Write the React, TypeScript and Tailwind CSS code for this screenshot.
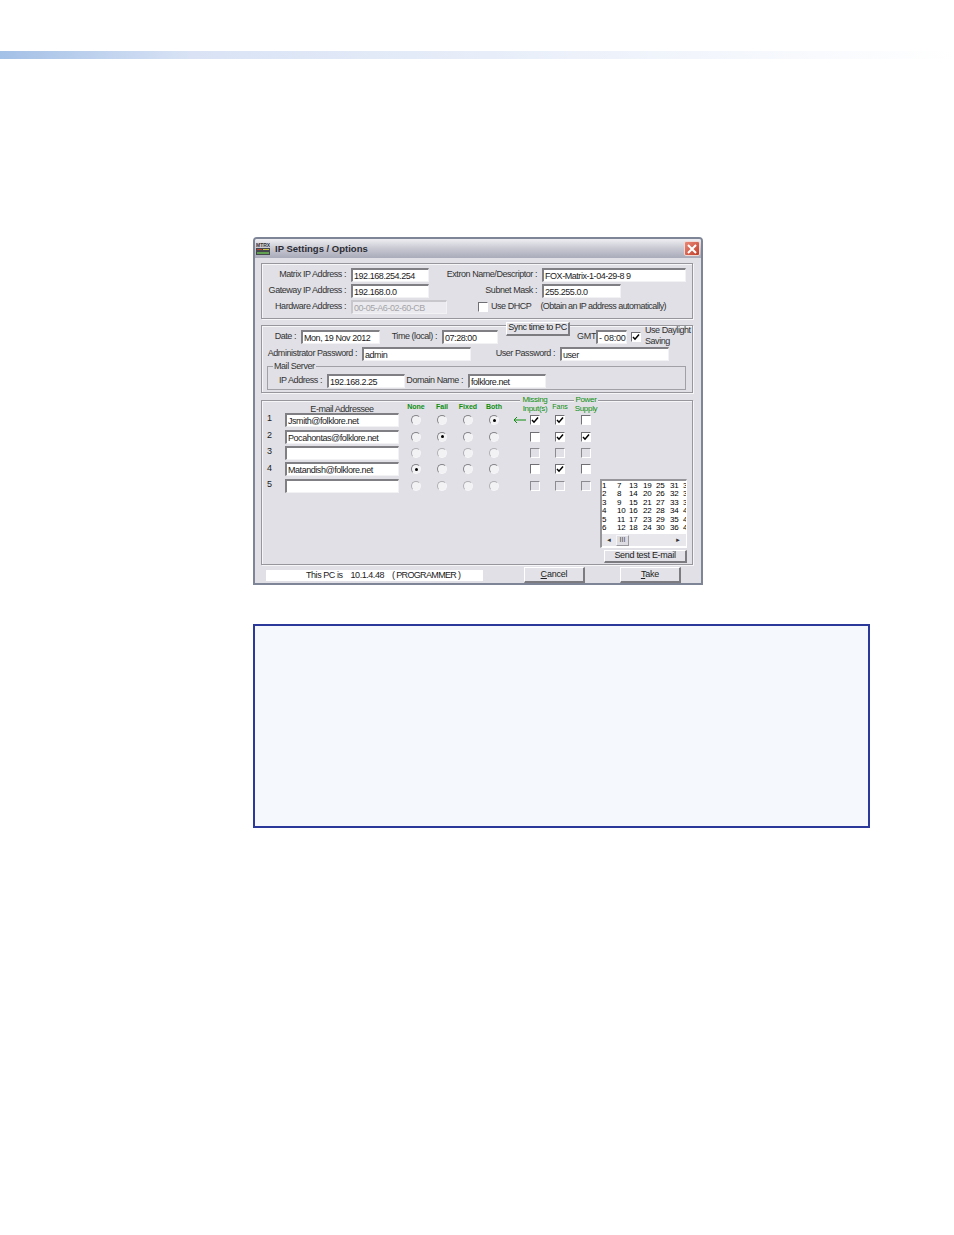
import { ReactNode } from "react";

const font = "font-['Liberation_Sans',Arial,sans-serif]";

const Input = ({ value = "", w, disabled = false, spaced = false }: { value?: string; w: string; disabled?: boolean; spaced?: boolean }) => (
  <div
    className={`${w} h-[14px] shrink-0 overflow-hidden whitespace-nowrap border-t-2 border-l-2 pl-[1px] text-[9px] leading-[12px] ${
      disabled ? "border-[#c8c8cc] bg-[#ebebef] text-[#a4a4a8]" : "border-[#808084] bg-white text-[#222]"
    } border-r border-b border-r-[#f2f2f4] border-b-[#f2f2f4] ${spaced ? "tracking-[-0.2px]" : "tracking-[-0.45px]"}`}
  >
    {value}
  </div>
);

const Label = ({ children, w }: { children: ReactNode; w: string }) => (
  <div className={`${w} shrink-0 whitespace-nowrap pr-[5px] text-right text-[9px] tracking-[-0.45px] text-[#333]`}>{children}</div>
);

const Panel = ({ className, children }: { className: string; children: ReactNode }) => (
  <div className={`ml-[6px] mr-[8px] border border-[#96969c] shadow-[inset_1px_1px_0_#f6f6f8,1px_1px_0_#f6f6f8] ${className}`}>{children}</div>
);

const Radio = ({ on = false, off = false }: { on?: boolean; off?: boolean }) => (
  <div className={`flex h-[10px] w-[10px] items-center justify-center rounded-full border border-r-[#f6f6f8] border-b-[#f6f6f8] bg-[#f2f2f4] ${off ? "border-t-[#b0b0b4] border-l-[#b0b0b4]" : "border-t-[#848488] border-l-[#848488]"}`}>
    {on && <div className="h-[3px] w-[3px] rounded-full bg-black" />}
  </div>
);

const Check = ({ on = false, off = false }: { on?: boolean; off?: boolean }) => (
  <div className={`flex h-[10px] w-[10px] items-center justify-center border-t border-l border-r border-b border-r-white border-b-white ${off ? "border-t-[#8c8c90] border-l-[#8c8c90] bg-[#e0e0e6]" : "border-t-[#707074] border-l-[#707074] bg-white"}`}>
    {on && (
      <svg width="8" height="8" viewBox="0 0 8 8">
        <path d="M1 4 L3 6.2 L7 1.5" fill="none" stroke="#000" strokeWidth="1.5" />
      </svg>
    )}
  </div>
);

const WinButton = ({ children, w, h = "h-[16px]" }: { children: ReactNode; w: string; h?: string }) => (
  <div className={`${w} ${h} flex shrink-0 items-center justify-center whitespace-nowrap border-t border-l border-white border-r-2 border-b-2 border-r-[#7c7c80] border-b-[#7c7c80] bg-[#e2e2e8] text-[9px] tracking-[-0.2px] text-[#222]`}>
    {children}
  </div>
);

const rows = [
  { n: 1, mail: "Jsmith@folklore.net", radio: 3, checks: [true, true, false], off: false },
  { n: 2, mail: "Pocahontas@folklore.net", radio: 1, checks: [false, true, true], off: false },
  { n: 3, mail: "", radio: -1, checks: [false, false, false], off: true },
  { n: 4, mail: "Matandish@folklore.net", radio: 0, checks: [false, true, false], off: false },
  { n: 5, mail: "", radio: -1, checks: [false, false, false], off: true },
];

const listCols = [
  { w: "w-[15px]", items: ["1", "2", "3", "4", "5", "6"] },
  { w: "w-[12px]", items: ["7", "8", "9", "10", "11", "12"] },
  { w: "w-[14px]", items: ["13", "14", "15", "16", "17", "18"] },
  { w: "w-[13px]", items: ["19", "20", "21", "22", "23", "24"] },
  { w: "w-[14px]", items: ["25", "26", "27", "28", "29", "30"] },
  { w: "w-[13px]", items: ["31", "32", "33", "34", "35", "36"] },
  { w: "w-[3px]", items: ["37", "38", "39", "40", "41", "42"] },
];

const Dialog = () => (
  <div className={`${font} ml-[253px] h-[348px] w-[450px] overflow-hidden rounded-t-[4px] border-2 border-[#7d8596] bg-[#e0e0e6]`}>
    {/* Title bar */}
    <div className="flex h-[19px] items-center bg-gradient-to-b from-[#eeeef2] via-[#c8c8d2] to-[#a9abba] pl-[1px] pr-[1px]">
      <svg width="14" height="14" viewBox="0 0 14 14">
        <text x="0" y="4.5" fontSize="5" fontWeight="700" fill="#333" fontFamily="Liberation Sans">MTRX</text>
        <rect x="0" y="6" width="14" height="7" fill="#44484c" />
        <rect x="1" y="7" width="5" height="1" fill="#c04030" />
        <rect x="7" y="7" width="6" height="1" fill="#d0c040" />
        <rect x="1" y="10" width="12" height="2" fill="#60a050" />
      </svg>
      <span className="ml-[5px] mt-[2px] text-[9.5px] font-bold text-[#2c2c34]">IP Settings / Options</span>
      <div className="ml-auto flex h-[15px] w-[16px] items-center justify-center rounded-[2px] border border-[#f0d8d4] bg-gradient-to-br from-[#e88878] to-[#c03c28]">
        <svg width="10" height="10" viewBox="0 0 10 10">
          <path d="M1 1 L9 9 M9 1 L1 9" stroke="#fff" strokeWidth="2" />
        </svg>
      </div>
    </div>

    {/* Network */}
    <Panel className="mt-[5px] h-[56px] pl-[1px] pt-[4px]">
      <div className="flex h-[14px] items-center">
        <Label w="w-[88px]">Matrix IP Address :</Label>
        <Input w="w-[78px]" value="192.168.254.254" />
        <Label w="w-[113px]">Extron Name/Descriptor :</Label>
        <Input w="w-[144px]" value="FOX-Matrix-1-04-29-8 9" />
      </div>
      <div className="mt-[2px] flex h-[14px] items-center">
        <Label w="w-[88px]">Gateway IP Address :</Label>
        <Input w="w-[78px]" value="192.168.0.0" />
        <Label w="w-[113px]">Subnet Mask :</Label>
        <Input w="w-[79px]" value="255.255.0.0" />
      </div>
      <div className="mt-[2px] flex h-[14px] items-center">
        <Label w="w-[88px]">Hardware Address :</Label>
        <Input w="w-[96px]" value="00-05-A6-02-60-CB" disabled />
        <div className="ml-[31px]"><Check /></div>
        <span className="ml-[3px] whitespace-nowrap text-[9px] tracking-[-0.45px] text-[#333]">Use DHCP</span>
        <span className="ml-[9px] whitespace-nowrap text-[9px] tracking-[-0.55px] text-[#333]">(Obtain an IP address automatically)</span>
      </div>
    </Panel>

    {/* Date, passwords, mail server */}
    <Panel className="mt-[6px] h-[68px] pl-[1px] pt-[4px]">
      <div className="flex h-[14px] items-center">
        <Label w="w-[38px]">Date :</Label>
        <Input w="w-[79px]" value="Mon, 19 Nov 2012" />
        <Label w="w-[62px]">Time (local) :</Label>
        <Input w="w-[56px]" value="07:28:00" />
        <div className="ml-[8px] -mt-[17px]">
          <WinButton w="w-[64px]" h="h-[14px]"><span className="tracking-[-0.4px]">Sync time to PC</span></WinButton>
        </div>
        <span className="ml-[7px] w-[19px] shrink-0 text-[9px] tracking-[-0.2px] text-[#333]">GMT</span>
        <Input w="w-[31px]" value="- 08:00" spaced />
        <div className="ml-[4px]"><Check on /></div>
        <div className="ml-[4px] -mt-[2px] whitespace-nowrap text-[9px] leading-[11px] tracking-[-0.45px] text-[#333]">
          Use Daylight
          <br />
          Saving
        </div>
      </div>
      <div className="mt-[3px] flex h-[14px] items-center">
        <Label w="w-[99px]">Administrator Password :</Label>
        <Input w="w-[109px]" value="admin" />
        <Label w="w-[89px]">User Password :</Label>
        <Input w="w-[109px]" value="user" />
      </div>
      <div className="relative ml-[4px] mt-[5px] h-[24px] w-[419px] border border-[#a0a0a6] pl-[5px] pt-[7px]">
        <span className="absolute -top-[6px] left-[5px] bg-[#e0e0e6] px-[1px] text-[9px] leading-[11px] tracking-[-0.45px] text-[#333]">Mail Server</span>
        <div className="flex h-[14px] items-center">
          <Label w="w-[54px]">IP Address :</Label>
          <Input w="w-[78px]" value="192.168.2.25" />
          <Label w="w-[63px]">Domain Name :</Label>
          <Input w="w-[78px]" value="folklore.net" />
        </div>
      </div>
    </Panel>

    {/* E-mail alerts */}
    <Panel className="relative mt-[7px] flex h-[165px] pl-[5px]">
      <div className="w-[333px]">
        <div className="-mt-[3px] flex h-[14px] items-end text-[7px] text-[#0f8f0f]">
          <div className="w-[18px]" />
          <div className="-mb-[1px] w-[114px] text-center text-[9px] leading-[8px] tracking-[-0.45px] text-[#333]">E-mail Addressee</div>
          <div className="w-[4px]" />
          <div className="w-[26px] pb-[1px] text-center font-bold leading-[9px]">None</div>
          <div className="w-[26px] pb-[1px] text-center font-bold leading-[9px]">Fail</div>
          <div className="w-[26px] pb-[1px] text-center font-bold leading-[9px]">Fixed</div>
          <div className="w-[26px] pb-[1px] text-center font-bold leading-[9px]">Both</div>
          <div className="-mb-[1px] w-[40px]">
            <div className="ml-[13px] w-[30px] bg-[#e0e0e6] text-center text-[8px] leading-[8.5px] tracking-[-0.3px]">Missing<br />Input(s)</div>
          </div>
          <div className="w-[26px] pb-[1px] text-center leading-[9px]">Fans</div>
          <div className="-mb-[1px] w-[26px] px-[1px]">
            <div className="bg-[#e0e0e6] text-center text-[8px] leading-[8.5px] tracking-[-0.3px]">Power<br />Supply</div>
          </div>
        </div>
        {rows.map((r) => (
          <div key={r.n} className="flex h-[16.4px] items-center">
            <div className="-mt-[2px] w-[18px] text-[9px] text-[#222]">{r.n}</div>
            <Input w="w-[114px]" value={r.mail} />
            <div className="w-[4px]" />
            {[0, 1, 2, 3].map((i) => (
              <div key={i} className="flex w-[26px] justify-center">
                <Radio on={r.radio === i} off={r.off} />
              </div>
            ))}
            <div className="relative flex w-[40px] justify-end pr-[7px]">
              {r.n === 1 && (
                <svg className="absolute left-[6px] top-[1px]" width="14" height="8" viewBox="0 0 14 8">
                  <path d="M4 1 L1 4 L4 7 M1 4 H13" fill="none" stroke="#0f8f0f" />
                </svg>
              )}
              <Check on={r.checks[0]} off={r.off} />
            </div>
            <div className="flex w-[26px] justify-center"><Check on={r.checks[1]} off={r.off} /></div>
            <div className="flex w-[26px] justify-center"><Check on={r.checks[2]} off={r.off} /></div>
          </div>
        ))}
      </div>
      <div className="mt-[78px] flex flex-col items-start">
        <div className="h-[69px] w-[87px] overflow-hidden border-t-2 border-l-2 border-r border-b border-[#96969a] border-r-white border-b-white bg-white">
          <div className="flex h-[53px] overflow-hidden pt-[1px] text-[8px] leading-[8.4px] tracking-[-0.2px] text-black">
            {listCols.map((col) => (
              <div key={col.items[0]} className={`${col.w} shrink-0 overflow-hidden`}>
                {col.items.map((v) => (
                  <div key={v}>{v}</div>
                ))}
              </div>
            ))}
          </div>
          <div className="flex h-[12px] items-center bg-[#e8e8ec]">
            <span className="ml-[4px] text-[6px] leading-none text-[#333]">◄</span>
            <div className="ml-[4px] flex h-[11px] w-[13px] items-center justify-center border border-[#f6f6f8] border-r-[#9a9aa0] border-b-[#9a9aa0] bg-[#dcdce2] text-[7px] text-[#444]">III</div>
            <span className="ml-auto mr-[5px] text-[6px] leading-none text-[#333]">►</span>
          </div>
        </div>
        <div className="ml-[4px] mt-[2px]">
          <WinButton w="w-[83px]" h="h-[13px]"><span className="tracking-[-0.3px]">Send test E-mail</span></WinButton>
        </div>
      </div>
    </Panel>

    {/* Status row */}
    <div className="mt-[1px] flex h-[18px] items-center pl-[11px]">
      <div className="flex h-[11px] w-[217px] bg-white pl-[40px] text-[9px] leading-[10px] tracking-[-0.45px] text-[#222]">
        <span>This PC is</span>
        <span className="ml-[8px]">10.1.4.48</span>
        <span className="ml-[8px] tracking-[-0.65px]">( PROGRAMMER )</span>
      </div>
      <div className="ml-[41px]"><WinButton w="w-[61px]"><span><u>C</u>ancel</span></WinButton></div>
      <div className="ml-[35px]"><WinButton w="w-[61px]"><span><u>T</u>ake</span></WinButton></div>
    </div>
  </div>
);

export default function App() {
  return (
    <div className="min-h-[1235px] w-[954px] bg-white pt-[51px]">
      <div className="h-[8px] w-full bg-gradient-to-r from-[#a3c0e6] via-[#d9e3f5] via-[20%] to-white" />
      <div className="pt-[178px]">
        <Dialog />
      </div>
      <div className="ml-[253px] mt-[39px] h-[204px] w-[617px] border-2 border-[#2b3a9a] bg-[#f5f9fd]" />
    </div>
  );
}
